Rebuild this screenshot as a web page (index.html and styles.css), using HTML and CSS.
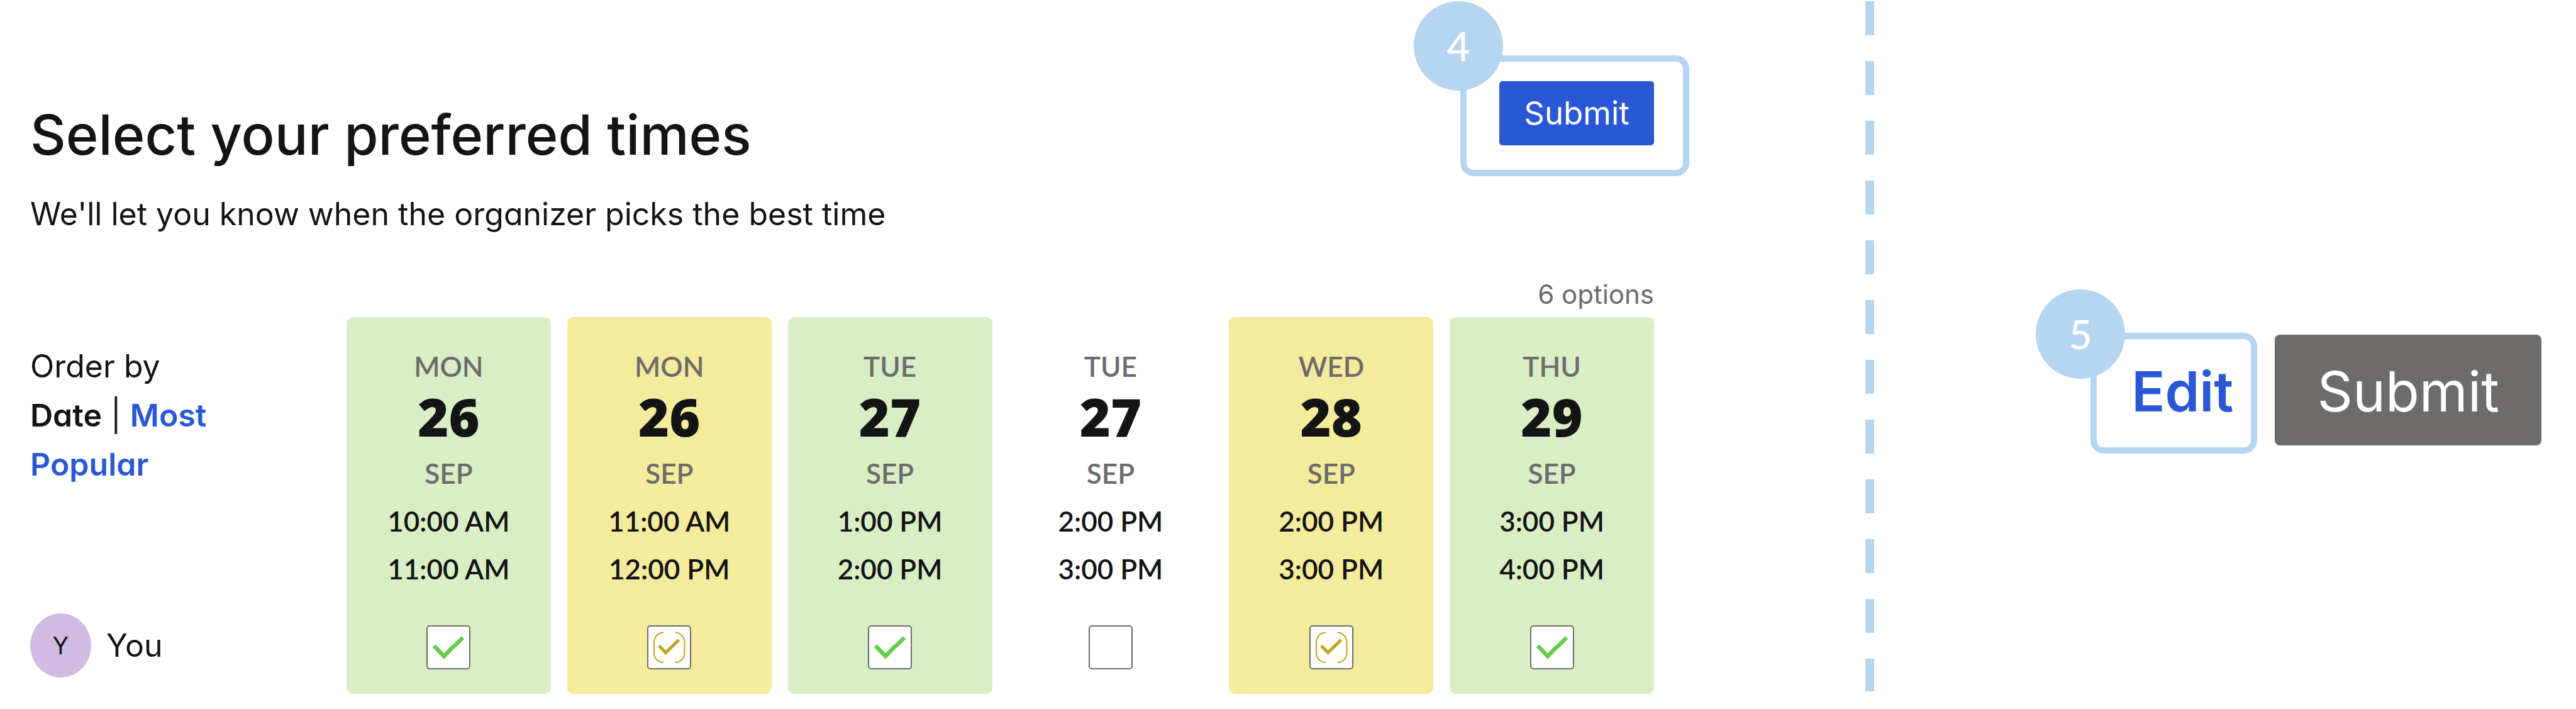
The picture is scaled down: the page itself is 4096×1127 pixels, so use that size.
FILE: index.html
```html
<!DOCTYPE html>
<html lang="en">
<head>
<meta charset="utf-8">
<title>Select your preferred times</title>
<link rel="stylesheet" href="styles.css">
</head>
<body>
<svg class="sprite" aria-hidden="true">
  <symbol id="yes" viewBox="0 0 70 70">
    <path d="M12 32.500L28 49L42 34.500L46 31.500L58 19.500" fill="none" stroke="#66cc4d" stroke-width="6.500"/>
  </symbol>
  <symbol id="maybe" viewBox="0 0 70 70">
    <path d="M19 32.500L29.500 43.500L50.500 23" fill="none" stroke="#bfa51c" stroke-width="5"/>
    <path d="M26 11.500C17 11.500 11 19 11 27V44C11 52 17 59 26 59M44.500 11.500C53.500 11.500 59.500 19 59.500 27V44C59.500 52 53.500 59 44.500 59" fill="none" stroke="#bfa51c" stroke-width="2"/>
  </symbol>
</svg>
<main class="page">
  <section class="poll">
    <header class="head">
      <div class="titles">
        <h1 class="title">Select your preferred times</h1>
        <p class="subtitle">We'll let you know when the organizer picks the best time</p>
      </div>
      <div class="callout callout-submit">
        <button class="btn btn-primary" type="submit">Submit</button>
        <span class="badge">4</span>
      </div>
    </header>
    <p class="count">6 options</p>
    <div class="board">
      <aside class="side">
        <p class="order">Order by<br><strong>Date</strong> | <a class="link" href="#popular">Most Popular</a></p>
        <div class="person"><span class="avatar">Y</span>You</div>
      </aside>
      <ul class="options">
        <li><label class="card yes"><span class="muted">MON</span><span class="day">26</span><span class="muted">SEP</span><span>10:00 AM</span><span>11:00 AM</span><span class="check"><input class="box" type="checkbox" checked><svg class="mark"><use href="#yes"/></svg></span></label></li>
        <li><label class="card maybe"><span class="muted">MON</span><span class="day">26</span><span class="muted">SEP</span><span>11:00 AM</span><span>12:00 PM</span><span class="check"><input class="box" type="checkbox" checked><svg class="mark"><use href="#maybe"/></svg></span></label></li>
        <li><label class="card yes"><span class="muted">TUE</span><span class="day">27</span><span class="muted">SEP</span><span>1:00 PM</span><span>2:00 PM</span><span class="check"><input class="box" type="checkbox" checked><svg class="mark"><use href="#yes"/></svg></span></label></li>
        <li><label class="card"><span class="muted">TUE</span><span class="day">27</span><span class="muted">SEP</span><span>2:00 PM</span><span>3:00 PM</span><span class="check"><input class="box" type="checkbox"></span></label></li>
        <li><label class="card maybe"><span class="muted">WED</span><span class="day">28</span><span class="muted">SEP</span><span>2:00 PM</span><span>3:00 PM</span><span class="check"><input class="box" type="checkbox" checked><svg class="mark"><use href="#maybe"/></svg></span></label></li>
        <li><label class="card yes"><span class="muted">THU</span><span class="day">29</span><span class="muted">SEP</span><span>3:00 PM</span><span>4:00 PM</span><span class="check"><input class="box" type="checkbox" checked><svg class="mark"><use href="#yes"/></svg></span></label></li>
      </ul>
    </div>
  </section>
  <div class="divider"></div>
  <section class="after">
    <div class="callout callout-edit">
      <button class="btn btn-edit" type="button">Edit</button>
      <span class="badge">5</span>
    </div>
    <button class="btn btn-done" type="button">Submit</button>
  </section>
</main>
</body>
</html>
```
FILE: styles.css
```css
* { box-sizing: border-box; }

body {
  margin: 0;
  background: #fff;
  color: #141414;
  font: 400 50px/78px Inter, "Open Sans", sans-serif;
  font-feature-settings: "cv11";
}

h1, p, ul { margin: 0; padding: 0; }

.sprite { display: none; }

.page {
  display: grid;
  grid-template-columns: 2966fr 14px 1116fr;
}

/* Poll */
.poll { padding: 0 336px 24px 48px; }

.head {
  display: flex;
  justify-content: space-between;
  align-items: flex-start;
}

.titles { padding-top: 161px; }

.title {
  font-size: 88px;
  line-height: 106px;
  font-weight: 500;
}

.subtitle { margin-top: 34px; }

.count {
  margin: 59px 0 6px;
  text-align: right;
  font-size: 42px;
  line-height: 60px;
  color: #6d6b6b;
}

.board {
  display: grid;
  grid-template-columns: 503px 1fr;
}

.side {
  display: flex;
  flex-direction: column;
  justify-content: space-between;
  padding: 39px 0 26px;
}

.order { max-width: 320px; }
.order strong, .link { font-weight: 600; }
.link { color: #2957d5; text-decoration: none; }

.person {
  display: flex;
  align-items: center;
  gap: 24px;
}

.avatar {
  display: grid;
  place-items: center;
  width: 97px;
  height: 102px;
  border-radius: 50%;
  background: #d1bbe2;
  font-size: 38px;
}

.options {
  display: grid;
  grid-template-columns: repeat(6, 1fr);
  gap: 26px;
  list-style: none;
}

.card {
  display: flex;
  flex-direction: column;
  align-items: center;
  padding: 40px 0 39px;
  border-radius: 10px;
  font: 600 44px/76px Lato, sans-serif;
}

.card.yes { background: #d9eec5; }
.card.maybe { background: #f4eb9c; }

.muted { color: #6d6b6b; }

.day {
  margin-bottom: 10px;
  font: 800 84px/84px "Open Sans", sans-serif;
}

.check {
  display: grid;
  margin-top: 52px;
}

.box, .mark {
  grid-area: 1 / 1;
  width: 70px;
  height: 70px;
}

.box {
  appearance: none;
  margin: 0;
  border: 2px solid #6d6b6b;
  border-radius: 5px;
  background: #fff;
}

.mark { pointer-events: none; }

/* Callouts */
.callout {
  position: relative;
  border: 10px solid #b6d5f0;
  border-radius: 21px;
}

.callout-submit {
  margin: 88px -56px 0 0;
  padding: 31px 46px 39px 52px;
}

.callout-edit { padding: 29px 28px 35px 55px; }

.badge {
  position: absolute;
  top: -96px;
  left: -84px;
  width: 142px;
  height: 142px;
  border-radius: 50%;
  background: #b6d5f0;
  color: #fff;
  font: 500 64px/142px Lato, sans-serif;
  text-align: center;
}

.callout-edit .badge {
  top: -79px;
  left: -97px;
}

/* Buttons */
.btn {
  display: block;
  margin: 0;
  border: 0;
  background: none;
  color: #fff;
  font: inherit;
  font-feature-settings: inherit;
}

.btn-primary {
  padding: 0 39px;
  border-radius: 5px;
  background: #2957d5;
  font-size: 51px;
  line-height: 102px;
}

.btn-edit, .btn-done {
  font-size: 88px;
  line-height: 108px;
}

.btn-edit {
  padding: 0;
  color: #2957d5;
  font-weight: 600;
}

.btn-done {
  padding: 36px 67px 32px;
  border-radius: 8px;
  background: #6d6c6a;
}

/* Dashed line between the two stages */
.divider {
  margin: 2px 0 28px;
  background: repeating-linear-gradient(#b6d5f0 0 54px, transparent 54px 95px);
}

.after {
  display: flex;
  justify-content: flex-end;
  align-items: baseline;
  gap: 28px;
  padding: 529px 55px 0 0;
}
```
